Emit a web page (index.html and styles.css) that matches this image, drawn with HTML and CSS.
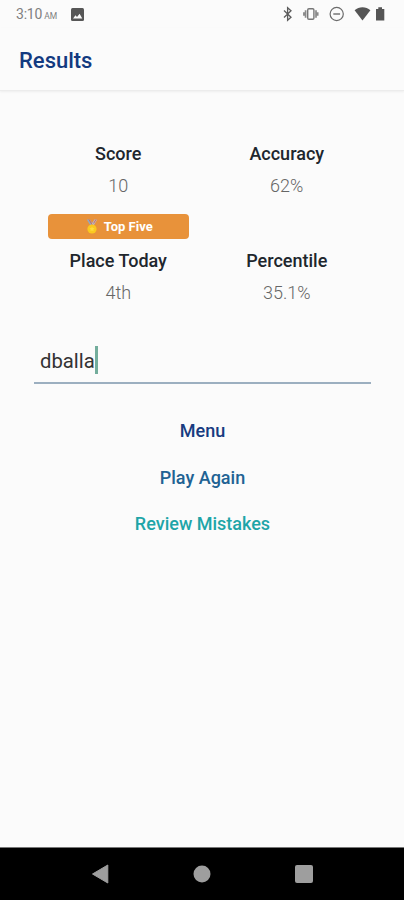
FILE: index.html
```html
<!DOCTYPE html>
<html lang="en">
<head>
  <meta charset="UTF-8">
  <title>Results</title>
  <link rel="stylesheet" href="styles.css">
</head>
<body>
  <div class="status">
    <span class="time">3:10</span>
    <span class="ampm">AM</span>
    <svg class="photo" width="13" height="13" viewBox="0 0 13 13">
      <rect width="13" height="13" rx="1.5" fill="#565656"/>
      <path d="M2 10.5L4.5 7.3L6 9L8.6 5.8L11.3 10.5Z" fill="#fafafa"/>
    </svg>
    <svg class="icons" width="106" height="18" viewBox="280 5 106 18">
      <path d="M284 10.5L291 17.3L287.6 20.3V7.7L291 10.7L284 17.5" fill="none" stroke="#5c5c5c" stroke-width="1.3"/>
      <rect x="307.7" y="8.7" width="6.2" height="10.6" rx="1.2" fill="none" stroke="#777" stroke-width="1.4"/>
      <path d="M305.6 10.3V17.7M303.9 12.3V15.7M316 10.3V17.7M317.7 12.3V15.7" fill="none" stroke="#8a8a8a" stroke-width="1.7"/>
      <circle cx="336.7" cy="14" r="6.6" fill="none" stroke="#6c6c6c" stroke-width="1.2"/>
      <path d="M333.3 14H340.1" stroke="#6c6c6c" stroke-width="1.4"/>
      <path d="M354.6 10.2C359 6.2 366 6.2 370.4 10.2L362.5 20.5Z" fill="#555"/>
      <path d="M376 9H378.3V7.3H382V9H384.3V20.6H376Z" fill="#555"/>
    </svg>
  </div>
  <div class="header">Results</div>
  <div class="main">
    <div class="stats">
      <div class="stat">
        <div class="label">Score</div>
        <div class="value">10</div>
      </div>
      <div class="stat">
        <div class="label">Accuracy</div>
        <div class="value">62%</div>
      </div>
      <div class="stat">
        <div class="badge">
          <svg width="12" height="15" viewBox="0 0 12 15">
            <path d="M0.8 0.5H4L7.5 6L5 7.5Z" fill="#8fa9c4"/>
            <path d="M11.2 0.5H8.4L5 6L7 7.5Z" fill="#b4b9cc"/>
            <path d="M3 0.5L6.6 6.5M10 0.5L7.6 4.4" stroke="#d9634e" stroke-width="0.9"/>
            <circle cx="6" cy="10" r="4.6" fill="#fbc91f"/>
            <path d="M6 7.4L6.8 9.1L8.6 9.3L7.3 10.5L7.6 12.3L6 11.4L4.4 12.3L4.7 10.5L3.4 9.3L5.2 9.1Z" fill="#ffdc3c"/>
          </svg>
          <span>Top Five</span>
        </div>
        <div class="label">Place Today</div>
        <div class="value">4th</div>
      </div>
      <div class="stat">
        <div class="label">Percentile</div>
        <div class="value">35.1%</div>
      </div>
    </div>
    <div class="name">
      <span>dballa</span>
      <i class="caret"></i>
    </div>
    <div class="links">
      <a class="menu">Menu</a>
      <a class="again">Play Again</a>
      <a class="review">Review Mistakes</a>
    </div>
  </div>
  <div class="nav">
    <svg width="18" height="20" viewBox="0 0 18 20"><path d="M1.5 10L16.8 1V19Z" fill="#9e9e9e" stroke="#9e9e9e" stroke-linejoin="round"/></svg>
    <svg width="18" height="18" viewBox="0 0 18 18"><circle cx="9" cy="9" r="8.5" fill="#9e9e9e"/></svg>
    <svg width="18" height="18" viewBox="0 0 18 18"><rect width="18" height="18" rx="2" fill="#9e9e9e"/></svg>
  </div>
</body>
</html>
```
FILE: styles.css
```css
*{
  margin: 0;
  padding: 0;
  box-sizing: border-box;
}
body{
  height: 900px;
  display: flex;
  flex-direction: column;
  background: #fbfbfb;
  font-family: Roboto, sans-serif;
  overflow: hidden;
}
svg{
  display: block;
}
.status{
  height: 28px;
  padding: 0 18px 0 16px;
  display: flex;
  align-items: center;
  color: #808080;
}
.time{
  font-size: 14px;
  letter-spacing: -0.2px;
}
.ampm{
  margin: 3px 0 0 2px;
  font-size: 8.5px;
}
.photo{
  margin-left: 14px;
}
.icons{
  margin-left: auto;
}
.header{
  height: 63px;
  padding: 0 19px;
  line-height: 66px;
  font-size: 22px;
  font-weight: 500;
  color: #133a80;
  border-bottom: 1px solid #ececec;
  box-shadow: 0 1px 2px #eee;
}
.main{
  flex: 1;
  padding: 50px 33px 0 34px;
}
.stats{
  display: grid;
  grid-template-columns: 1fr 1fr;
  grid-template-rows: 73px 92px;
  text-align: center;
}
.stat{
  display: flex;
  flex-direction: column;
}
.stat:nth-child(n+3){
  justify-content: flex-end;
}
.label{
  line-height: 26px;
  font-size: 18px;
  font-weight: 500;
  color: #20262d;
}
.value{
  margin-top: 6px;
  line-height: 26px;
  font-size: 18px;
  font-weight: 300;
  color: #666;
}
.badge{
  height: 25px;
  margin: 0 14px 9px;
  padding-left: 2px;
  display: flex;
  align-items: center;
  justify-content: center;
  gap: 6px;
  border-radius: 4px;
  background: #e8923a;
  color: #fff;
  font-size: 13px;
  font-weight: 700;
}
.name{
  height: 38px;
  margin-top: 40px;
  padding-left: 6px;
  display: flex;
  border-bottom: 2px solid #9cafc0;
  font-size: 20.3px;
  line-height: 31px;
  color: #333;
}
.caret{
  width: 3px;
  height: 28px;
  background: #73ad9c;
}
.links{
  margin-top: 34px;
  display: flex;
  flex-direction: column;
  align-items: center;
  gap: 20.6px;
  font-size: 18px;
  line-height: 26px;
  font-weight: 500;
}
.menu{
  color: #173b80;
}
.again{
  color: #216293;
}
.review{
  color: #1ea5a8;
}
.nav{
  height: 53px;
  padding: 0 91px;
  display: flex;
  align-items: center;
  justify-content: space-between;
  background: #000;
  border-top: 1px solid #777;
}
```
